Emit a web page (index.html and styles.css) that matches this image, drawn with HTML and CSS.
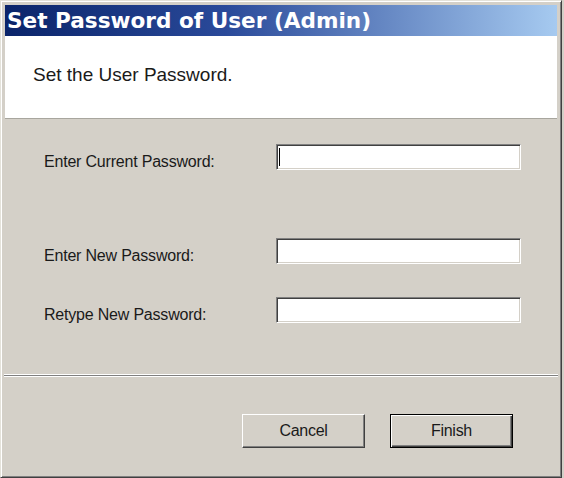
FILE: index.html
```html
<!DOCTYPE html>
<html lang="en">
<head>
    <meta charset="UTF-8">
    <title>Set Password of User (Admin)</title>
    <link rel="stylesheet" href="styles.css">
</head>
<body>

<div class="window">
    <div class="titlebar">Set Password of User (Admin)</div>

    <!-- Wizard header -->
    <div class="header">
        <p class="header-text">Set the User Password.</p>
    </div>

    <!-- Password fields -->
    <div class="content">
        <div class="row">
            <label class="label">Enter Current Password:</label>
            <div class="field"><span class="caret"></span></div>
        </div>
        <div class="row row-new">
            <label class="label">Enter New Password:</label>
            <div class="field"></div>
        </div>
        <div class="row row-retype">
            <label class="label">Retype New Password:</label>
            <div class="field"></div>
        </div>
    </div>

    <div class="separator"></div>

    <!-- Buttons -->
    <div class="footer">
        <button class="button">Cancel</button>
        <button class="button default">Finish</button>
    </div>
</div>

</body>
</html>
```

FILE: styles.css
```css
/* Page and window frame */
body {
    margin: 0;
    padding: 0;
    background: #d4d0c8;
    font-family: 'Liberation Sans', Arial, sans-serif;
    color: #1a1a1a;
}

.window {
    box-sizing: border-box;
    width: 562px;
    height: 478px;
    display: flex;
    flex-direction: column;
    padding: 4px;
    background: #d4d0c8;
    border: 1px solid;
    border-color: #e4e2da #404040 #404040 #e4e2da;
    box-shadow: inset 1px 1px #fff, inset -1px -1px #808080;
}

/* Title bar */
.titlebar {
    height: 31px;
    line-height: 31px;
    padding-left: 2px;
    font-family: 'DejaVu Sans', Verdana, sans-serif;
    font-weight: bold;
    font-size: 21.6px;
    color: #fff;
    background: linear-gradient(to right, #0a246a 0%, #2a4a9a 40%, #a6caf0 100%);
    white-space: nowrap;
    overflow: hidden;
}

/* White header area */
.header {
    height: 82px;
    background: #fff;
    border-bottom: 1px solid #a8a69e;
}

.header-text {
    margin: 0;
    padding: 28px 0 0 28px;
    font-size: 19px;
    line-height: 22px;
}

/* Form rows */
.content {
    flex: 1;
    padding: 25px 0 0 39px;
}

.row {
    display: flex;
    height: 26px;
}

.row-new {
    margin-top: 68px;
}

.row-retype {
    margin-top: 33px;
}

.label {
    width: 232px;
    font-size: 16px;
    line-height: 26px;
    padding-top: 5px;
    letter-spacing: -0.2px;
}

.field {
    box-sizing: border-box;
    width: 245px;
    height: 26px;
    display: flex;
    align-items: center;
    padding-left: 2px;
    background: #fff;
    border: 1px solid;
    border-color: #808080 #fff #fff #808080;
    box-shadow: inset 1px 1px #404040, inset -1px -1px #d4d0c8;
}

.caret {
    width: 1px;
    height: 18px;
    background: #000;
}

/* Etched separator */
.separator {
    height: 1px;
    margin: 0 -1px;
    background: #808080;
    border-top: 1px solid #fff;
    border-bottom: 1px solid #fff;
}

/* Button row */
.footer {
    box-sizing: border-box;
    height: 96px;
    display: flex;
    justify-content: flex-end;
    align-items: flex-start;
    gap: 25px;
    padding: 37px 44px 0 0;
}

.button {
    box-sizing: border-box;
    width: 123px;
    height: 34px;
    font-family: 'Liberation Sans', Arial, sans-serif;
    font-size: 16px;
    color: #1a1a1a;
    letter-spacing: -0.3px;
    background: #d4d0c8;
    border: 1px solid;
    border-color: #fff #404040 #404040 #fff;
    box-shadow: inset -1px -1px #808080;
    padding: 0;
}

.button.default {
    border-color: #000;
    box-shadow: inset 1px 1px #fff, inset -1px -1px #404040, inset -2px -2px #808080;
}
```
